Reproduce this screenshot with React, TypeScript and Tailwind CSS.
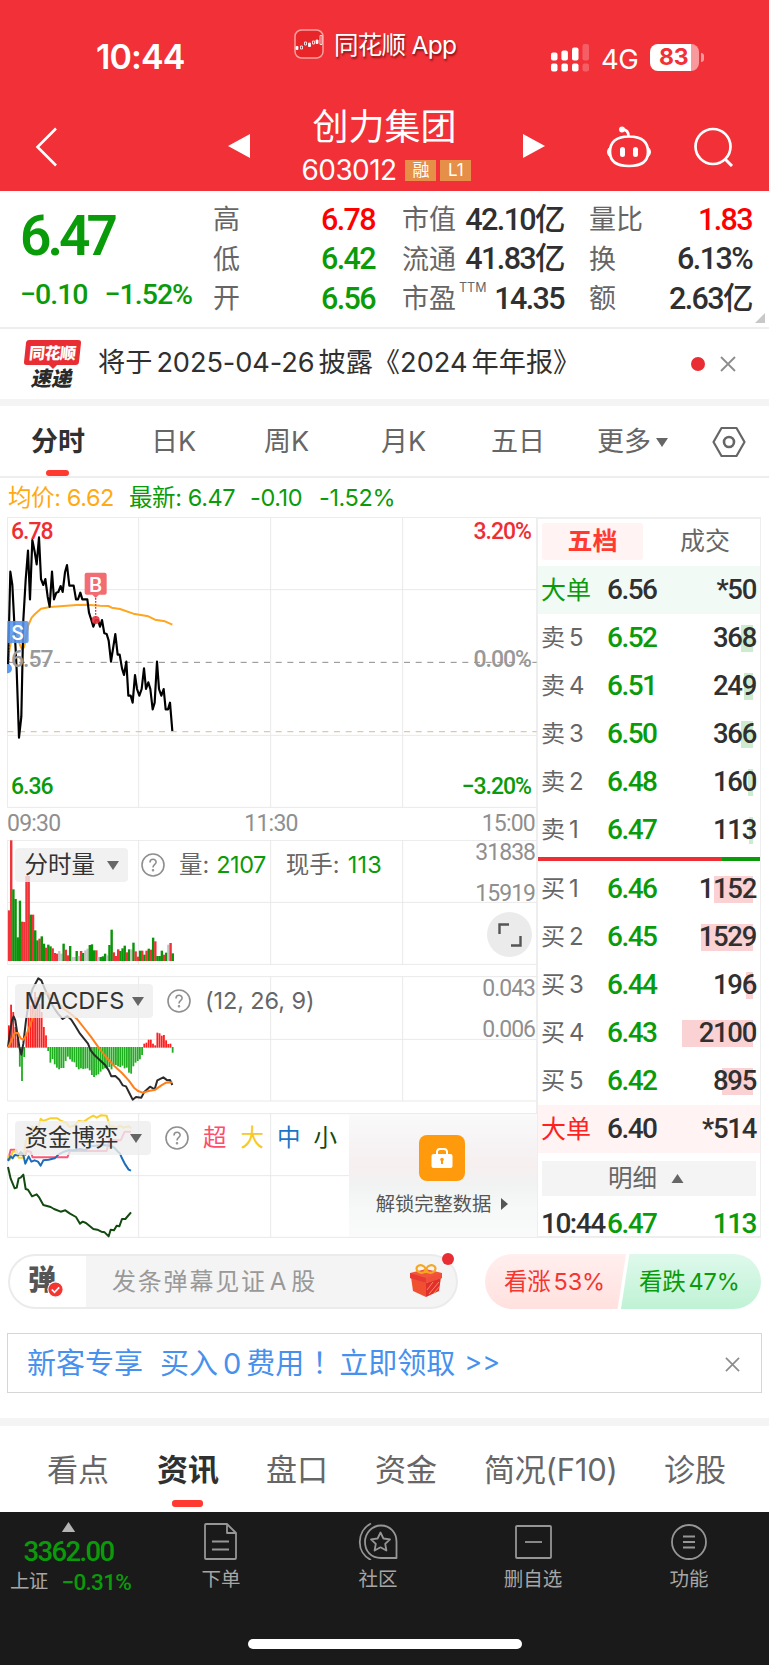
import type { ReactNode } from 'react';
import clsx from 'clsx';

const NUM = "[font-family:Roboto,'Noto_Sans_CJK_SC',sans-serif]";
const GREEN = 'text-[#0a9b0a]';
const RED = 'text-[#ef2e33]';

// ---------- data ----------

type Level = { label: string; price: string; qty: string; bar: number };

const asks: Level[] = [
  { label: '卖5', price: '6.52', qty: '368', bar: 12 },
  { label: '卖4', price: '6.51', qty: '249', bar: 9 },
  { label: '卖3', price: '6.50', qty: '366', bar: 12 },
  { label: '卖2', price: '6.48', qty: '160', bar: 5 },
  { label: '卖1', price: '6.47', qty: '113', bar: 4 },
];

const bids: Level[] = [
  { label: '买1', price: '6.46', qty: '1152', bar: 39 },
  { label: '买2', price: '6.45', qty: '1529', bar: 52 },
  { label: '买3', price: '6.44', qty: '196', bar: 7 },
  { label: '买4', price: '6.43', qty: '2100', bar: 71 },
  { label: '买5', price: '6.42', qty: '895', bar: 31 },
];

const pricePoints =
  '24,470 31,185 37,225 44,360 50,480 57,683 64,620 70,330 77,210 84,122 90,268 97,90 104,125 110,163 117,82 123,207 130,225 136,207 143,260 149,290 156,185 162,268 169,248 175,246 182,228 188,246 195,187 201,165 208,227 221,227 228,268 234,268 241,248 247,268 262,268 267,308 274,330 280,350 287,330 294,330 300,350 306,330 313,370 320,372 326,392 333,455 346,372 353,434 359,434 366,475 372,495 379,455 385,557 392,557 398,578 405,495 411,537 418,557 425,537 432,475 438,537 445,517 451,537 458,598 464,578 471,455 477,537 484,557 491,537 497,598 504,598 510,578 517,663';
const avgPoints =
  '24,450 30,410 38,375 45,365 52,380 60,405 66,418 72,412 78,385 84,348 95,323 105,312 123,296 150,291 190,288 230,285 260,284 300,287 325,288 335,293 360,297 400,311 445,319 465,329 495,334 517,344';

const volume =
  '240r 30r 177g 206g 321g 211g 274r 275r 137r 137r 253g 253r 300g 330g 325r 318g 340g 352r 343g 348g 354r 368r 370r 362x 370x 340g 358r 375r 347g 380x 380x 362g 377x 362r 368g 360x 355x 344g 342g 360g 360r 380x 380g 378g 370g 375x 344g 298g 366r 377r 357r 362g 354g 346g 366r 357g 357x 337g 363r 379r 361g 361r 373g 361r 355g 358r 322g 333r 377g 377g 361g 373r 367g 343x 338r 369g'
    .split(' ')
    .map((s) => ({ y: parseInt(s, 10), kind: s.slice(-1) }));
const volumeFill: Record<string, string> = { r: '#ef3338', g: '#0a940a', x: '#c3c3c3' };

const macdBars = [
  585, 523, 545, 590, 625, 707, 750, 678, 610, 560, 525, 510, 485, 500, 520, 545, 590, 615, 660, 695, 684, 700, 710,
  715, 711, 711, 690, 677, 685, 692, 694, 708, 715, 712, 714, 713, 712, 718, 732, 738, 733, 730, 722, 715, 712, 712,
  708, 715, 705, 702, 706, 708, 704, 712, 710, 725, 728, 706, 695, 690, 685, 672, 640, 637, 628, 628, 640, 645, 607,
  609, 616, 614, 630, 641, 640, 665,
];

// ---------- small pieces ----------

function Caret({ className }: { className?: string }) {
  return (
    <svg viewBox="0 0 12 9" className={clsx('shrink-0', className)}>
      <path d="M0 0h12L6 9z" fill="currentColor" />
    </svg>
  );
}

function Cross({ className }: { className?: string }) {
  return (
    <svg viewBox="0 0 16 16" className={clsx('shrink-0', className)} fill="none" stroke="#8c8c8c" strokeWidth="1.8">
      <path d="M1 1l14 14M15 1L1 15" />
    </svg>
  );
}

function Help() {
  return (
    <svg viewBox="0 0 24 24" className="size-6 shrink-0" fill="none" stroke="#8f8f8f" strokeWidth="1.6">
      <circle cx="12" cy="12" r="11" />
      <path d="M9 9.4c0-4.2 6.3-4 6.1-.2C15 11.400 12 11.300 12 14.400" />
      <circle cx="12" cy="17.200" r=".5" />
    </svg>
  );
}

function Grid({ top, mid, bottom, cut = 1610 }: { top: number; mid: number; bottom: number; cut?: number }) {
  return (
    <g stroke="#e9e9e9" strokeWidth="3" fill="none">
      <path d={`M22 ${top}H1610M22 ${bottom}H1610M22 ${top}V${bottom}`} />
      <path d={`M22 ${mid}H${cut}M416 ${top}V${bottom}M812 ${top}V${bottom}M1208 ${top}V${bottom}`} />
    </g>
  );
}

function ChartHead({ name, width, children }: { name: string; width: string; children: ReactNode }) {
  return (
    <div className="absolute left-2 top-2 flex h-[34px] items-center whitespace-nowrap text-[23.5px] text-[#666]">
      <div className={clsx('flex h-full items-center justify-between rounded-[4px] bg-[#eeeeee]/80 pl-[9.5px] pr-[9px] text-[#333]', width)}>
        {name}
        <Caret className="h-[9px] w-3 text-[#666]" />
      </div>
      {children}
    </div>
  );
}

// ---------- sections ----------

function Header() {
  return (
    <header className="flex h-[191px] flex-col bg-[#f13038] text-white">
      <div className="flex h-[100px] items-start">
        <div className="ml-[96px] mt-[40px] w-[198px] text-[34px] font-semibold leading-[34px] tracking-[-0.9px]">10:44</div>
        <svg viewBox="0 0 30 30" className="mt-[29px] size-[30px]">
          <rect x="1" y="1" width="28" height="28" rx="6.500" fill="#e82529" stroke="#f7a09f" strokeWidth="1.500" />
          <path d="M2 20l5-1 4-4 4 2 4-4 4-1 4-6" stroke="#c91b20" fill="none" />
          <g fill="#fff" stroke="#fff" strokeWidth=".8">
            <path d="M2 17.500h2v3H2zM14.500 14h2v3.500h-2zM22 11h2v3.500h-2z" />
            <path d="M6.500 17h2v3h-2zM10.500 13h2v3h-2zM18.500 12h2v3h-2zM26 6.500h2v9h-2z" fill="none" />
          </g>
        </svg>
        <div className="ml-[10px] mt-[31px] w-[217px] whitespace-nowrap text-[24.5px] leading-[28px] tracking-[-0.7px] [text-shadow:1px_2px_2px_rgba(60,0,0,.6)]">
          同花顺 App
        </div>
        <svg viewBox="0 0 38 28" className="mt-[43.500px] h-7 w-[38px]" fill="#fff">
          <rect x="0" y="8.500" width="6.500" height="8" rx="2" />
          <rect x="10.400" y="6.500" width="6.500" height="10" rx="2" />
          <rect x="21" y="3.500" width="6.500" height="13" rx="2" />
          <rect x="0" y="19.500" width="6.500" height="8" rx="2" />
          <rect x="10.400" y="19.500" width="6.500" height="8" rx="2" />
          <rect x="21" y="19.500" width="6.500" height="8" rx="2" />
          <g opacity=".22">
            <rect x="31.500" y="0" width="6.500" height="16.500" rx="2" />
            <rect x="31.500" y="19.500" width="6.500" height="8" rx="2" />
          </g>
        </svg>
        <div className="ml-[12px] mt-[44px] w-[49px] text-[27.5px] leading-[30px] tracking-[-0.5px]">4G</div>
        <div className="mt-[44px] flex items-center">
          <div className="flex h-[27px] w-[49px] items-center overflow-hidden rounded-[8px] bg-[linear-gradient(90deg,#fff_83%,#f89a9d_83%)] pl-[9px] text-[23px] font-bold leading-none tracking-[-0.3px] text-[#f13038]">
            83
          </div>
          <div className="ml-[1.5px] h-[9px] w-[3px] rounded-r-full bg-[#f89a9d]" />
        </div>
      </div>
      <div className="flex h-[91px]">
        <svg viewBox="0 0 22 40" className="ml-[35px] mt-[27px] h-10 w-[22px]" fill="none" stroke="#fff" strokeWidth="2.600">
          <path d="M21 1.500L2.500 20 21 38.500" />
        </svg>
        <svg viewBox="0 0 22 24" className="ml-[171px] mt-[34px] h-6 w-[22px]" fill="#fff">
          <path d="M22 0v24L0 12z" />
        </svg>
        <div className="flex w-[273px] flex-col items-center">
          <div className="-ml-[4px] mt-[7px] text-[36px] leading-[40px]">创力集团</div>
          <div className="mt-[11px] flex items-center gap-1">
            <span className="mr-[5px] text-[28px] leading-6 tracking-[-0.6px]">603012</span>
            <span className="grid h-[21px] w-[31px] place-items-center bg-[#e58f49] text-[17px] leading-none">融</span>
            <span className="grid h-[21px] w-[31px] place-items-center bg-[#e58f49] text-[17px] leading-none">L1</span>
          </div>
        </div>
        <svg viewBox="0 0 22 24" className="mt-[34px] h-6 w-[22px]" fill="#fff">
          <path d="M0 0v24l22-12z" />
        </svg>
        <svg viewBox="0 0 46 42" className="ml-[61px] mt-[26px] h-[42px] w-[46px]" fill="none" stroke="#fff" strokeWidth="2.700">
          <path d="M23 10.500C10 10.500 4 16 4 26c0 9 6 14 19 14s19-5 19-14c0-10-6-15.500-19-15.500zM22.500 10c0-4-2-6.200-6-6.600" />
          <circle cx="16" cy="3.500" r="1.600" fill="#fff" />
          <path d="M4 21c-3.300 3-3.300 7 0 10zM42 21c3.300 3 3.300 7 0 10z" fill="#fff" strokeWidth="1" />
          <path d="M16.500 23.500v5M29.500 23.500v5" strokeWidth="5" strokeLinecap="round" />
        </svg>
        <svg viewBox="0 0 40 40" className="ml-[41.5px] mt-[27px] size-10" fill="none" stroke="#fff" strokeWidth="2.700">
          <circle cx="19" cy="19.500" r="17.500" />
          <path d="M31 32l7 7" strokeWidth="3" />
        </svg>
      </div>
    </header>
  );
}

function QuoteCol({ rows, className }: { rows: [ReactNode, string, string][]; className: string }) {
  return (
    <div className={clsx('flex flex-col', className)}>
      {rows.map(([label, value, color], i) => (
        <div key={i} className="flex h-[39.5px] items-center justify-between whitespace-nowrap">
          <span className="text-[27px] leading-none text-[#666]">{label}</span>
          <span className={clsx(NUM, 'text-[30.5px] font-medium leading-none tracking-[-1.6px]', color)}>{value}</span>
        </div>
      ))}
    </div>
  );
}

function Quote() {
  return (
    <section className="relative flex h-[138px] border-b-2 border-[#eeeeee] pt-[9px]">
      <div className={clsx(NUM, 'ml-[20px] w-[193px] whitespace-nowrap', GREEN)}>
        <div className="mt-[9px] text-[55px] font-semibold leading-[54px] tracking-[-4px]">6.47</div>
        <div className="mt-[18px] flex gap-[17px] text-[28.5px] font-medium leading-[28px] tracking-[-1px]">
          <span>−0.10</span>
          <span>−1.52%</span>
        </div>
      </div>
      <QuoteCol
        className="w-[162px]"
        rows={[
          ['高', '6.78', 'text-[#ff0000]'],
          ['低', '6.42', GREEN],
          ['开', '6.56', GREEN],
        ]}
      />
      <QuoteCol
        className="ml-[27px] w-[162px]"
        rows={[
          ['市值', '42.10亿', 'text-[#303030]'],
          ['流通', '41.83亿', 'text-[#303030]'],
          [
            <>
              市盈<sup className="relative -top-[16px] ml-[3px] align-baseline text-[12.5px]">TTM</sup>
            </>,
            '14.35',
            'text-[#303030]',
          ],
        ]}
      />
      <QuoteCol
        className="ml-[25px] w-[163px]"
        rows={[
          ['量比', '1.83', 'text-[#ff0000]'],
          ['换', '6.13%', 'text-[#303030]'],
          ['额', '2.63亿', 'text-[#303030]'],
        ]}
      />
      <svg viewBox="0 0 10 10" className="absolute bottom-[4px] right-[4px] size-[10px]">
        <path d="M10 0v10H0z" fill="#c8c8c8" />
      </svg>
    </section>
  );
}

function News() {
  return (
    <section className="flex h-[77px] items-center border-b-[7px] border-[#f4f4f4] pb-px">
      <div className="ml-[24px] flex w-[57px] flex-col items-center font-black leading-none">
        <div className="grid h-[25px] w-[55px] -skew-x-6 place-items-center whitespace-nowrap rounded-[3px] bg-[#e92e33] text-[16px] leading-none tracking-[-0.5px] text-white">
          同花顺
        </div>
        <svg viewBox="0 0 8 4" className="h-1 w-2">
          <path d="M0 0h8L4 4z" fill="#e92e33" />
        </svg>
        <div className="-skew-x-12 text-[20.5px] leading-[19px] text-[#2a2a2a]">速递</div>
      </div>
      <div className="ml-[17px] w-[593px] whitespace-nowrap text-[27.2px] text-[#303030]">
        将于<span className="ml-1 tracking-[-0.1px]">2025-04-26</span>
        <span className="ml-1">披露《</span>2024<span className="ml-1">年年报》</span>
      </div>
      <div className="size-[14px] rounded-full bg-[#e92e33]" />
      <Cross className="ml-[15px] size-[16px]" />
    </section>
  );
}

function PeriodTabs() {
  return (
    <section className="flex h-[72px] items-center border-b-2 border-[#eeeeee] pt-[2px] text-[27px] text-[#666]">
      <div className="relative ml-[31px] flex h-full w-[120px] items-center font-bold text-[#303030]">
        分时
        <span className="absolute bottom-0 left-[15px] h-[6px] w-[23px] rounded-[3px] bg-[#ff3a30]" />
      </div>
      <div className="w-[113px]">日K</div>
      <div className="w-[117px]">周K</div>
      <div className="w-[110px]">月K</div>
      <div className="w-[106px]">五日</div>
      <div className="flex w-[115px] items-center">
        更多
        <Caret className="ml-[5px] h-[9px] w-3" />
      </div>
      <svg viewBox="0 0 34 32" className="h-8 w-[34px]" fill="none" stroke="#666" strokeWidth="2.2">
        <path d="M9.500 2h15l8 14-8 14h-15l-8-14z" strokeLinejoin="round" />
        <circle cx="17" cy="16" r="5" strokeWidth="2.600" />
      </svg>
    </section>
  );
}

function MainChart() {
  return (
    <div className={clsx(NUM, 'relative h-[323px] text-[23px] font-medium leading-none tracking-[-1px]')}>
      <svg viewBox="21 21 1590 873" className="h-[291px] w-[530px]" fill="none" strokeLinejoin="round">
        <Grid top={22} mid={239} bottom={892} />
        <path d="M22 676H1610" stroke="#e9e9e9" strokeWidth="3" />
        <path d="M22 457H1610" stroke="#8c8c8c" strokeWidth="3" strokeDasharray="18 17" />
        <path d="M22 665H1610" stroke="#dfc8a4" strokeWidth="4" strokeDasharray="18 17" />
        <polyline points={avgPoints} stroke="#ffa51f" strokeWidth="6" />
        <polyline points={pricePoints} stroke="#000" strokeWidth="6.500" />
        <path d="M287 255v70" stroke="#e2323c" strokeWidth="4" strokeDasharray="5 4" />
        <circle cx="287" cy="330" r="12" fill="#e2323c" fillOpacity=".9" />
        <path d="M260 188h54a6 6 0 0 1 6 6v54a6 6 0 0 1-6 6h-17l-10 10-10-10h-17a6 6 0 0 1-6-6v-54a6 6 0 0 1 6-6z" fill="#f16468" fillOpacity=".94" />
        <path d="M28 400v66" stroke="#3f86e0" strokeWidth="3" strokeDasharray="5 4" />
        <path d="M22 333h58a6 6 0 0 1 6 6v54a6 6 0 0 1-6 6H22z" fill="#5794ea" fillOpacity=".88" />
        <path d="M22 465a11 11 0 0 1 0 22z" fill="#5a9cf0" stroke="#5a9cf0" strokeWidth="6" />
      </svg>
      <span className="absolute left-[4.500px] top-[106px] text-[20px] text-white">S</span>
      <span className="absolute left-[82px] top-[58px] text-[21px] text-white">B</span>
      <span className={clsx('absolute left-[4px] top-[3px]', RED)}>6.78</span>
      <span className="absolute left-[4px] top-[131px] text-[#999]">6.57</span>
      <span className={clsx('absolute left-[4px] top-[258px]', GREEN)}>6.36</span>
      <span className={clsx('absolute right-[6px] top-[3px]', RED)}>3.20%</span>
      <span className="absolute right-[6px] top-[131px] text-[#999]">0.00%</span>
      <span className={clsx('absolute right-[6px] top-[258px]', GREEN)}>−3.20%</span>
      <div className="flex justify-between pr-[2px] pt-[4px] text-[23px] font-normal tracking-[-0.8px] text-[#8f8f8f]">
        <span>09:30</span>
        <span>11:30</span>
        <span>15:00</span>
      </div>
    </div>
  );
}

function AxisLabels({ labels }: { labels: [string, string] }) {
  return (
    <div className={clsx(NUM, 'absolute right-[2px] top-px flex flex-col items-end text-[23px] leading-none tracking-[-1px] text-[#8f8f8f]')}>
      <span className="h-[41px]">{labels[0]}</span>
      <span>{labels[1]}</span>
    </div>
  );
}

function VolumeChart() {
  return (
    <div className="relative h-[125px]">
      <svg viewBox="21 29 1590 375" className="h-[125px] w-[530px]">
        <Grid top={30} mid={216} bottom={402} />
        {volume.map(({ y, kind }, i) => (
          <rect key={i} x={23.5 + i * 6.55} y={y} width={kind === 'x' ? 7 : 7.2} height={392 - y} fill={volumeFill[kind]} />
        ))}
      </svg>
      <ChartHead name="分时量" width="w-[113px]">
        <span className="ml-[13px] flex">
          <Help />
        </span>
        <span className="ml-[14px]">量:</span>
        <span className={clsx('ml-[7px] tracking-[-0.5px]', GREEN)}>2107</span>
        <span className="ml-[20px]">现手:</span>
        <span className={clsx('ml-[8px] tracking-[0.3px]', GREEN)}>113</span>
      </ChartHead>
      <AxisLabels labels={['31838', '15919']} />
      <div className="absolute right-[5px] top-[72px] grid size-[45px] place-items-center rounded-full bg-[#ebebeb]">
        <svg viewBox="0 0 24 24" className="size-6" fill="none" stroke="#555" strokeWidth="2.400">
          <path d="M1.500 11V1.500H11M22.500 13v9.500H13" />
        </svg>
      </div>
    </div>
  );
}

function MacdChart() {
  return (
    <div className="relative mt-[11px] h-[126px]">
      <svg viewBox="21 437 1590 378" className="h-[126px] w-[530px]" fill="none" strokeLinejoin="round">
        <Grid top={439} mid={627} bottom={812} />
        {macdBars.map((y, i) => (
          <rect
            key={i}
            x={24 + i * 6.55}
            y={Math.min(y, 650)}
            width="5.400"
            height={Math.abs(y - 650) + 2}
            fill={y < 650 ? '#ff1f1f' : '#1fae1f'}
          />
        ))}
        <polyline
          points="24,650 30,605 36,570 41,558 46,570 52,610 58,650 64,673 70,640 78,570 88,505 98,475 106,460 115,444 124,450 132,470 142,492 152,515 162,533 174,550 188,566 202,557 214,568 226,587 240,610 252,625 264,640 272,660 284,675 300,690 316,705 326,720 334,738 346,737 358,748 368,765 378,768 388,788 398,808 408,800 424,802 432,786 450,769 464,777 472,750 490,741 502,750 510,749 517,764"
          stroke="#2b2b2b"
          strokeWidth="6"
        />
        <polyline
          points="24,652 34,632 44,608 54,608 62,624 70,628 80,612 90,585 104,545 118,505 130,490 142,488 156,498 172,515 190,534 210,549 230,565 250,590 272,618 296,652 318,680 342,706 366,728 386,750 402,772 414,782 428,787 446,782 466,778 484,765 498,757 517,756"
          stroke="#ff7f1a"
          strokeWidth="6"
        />
      </svg>
      <ChartHead name="MACDFS" width="w-[138px]">
        <span className="ml-[14px] flex">
          <Help />
        </span>
        <span className="ml-[14px] tracking-[-0.1px]">(12, 26, 9)</span>
      </ChartHead>
      <AxisLabels labels={['0.043', '0.006']} />
    </div>
  );
}

function FundChart() {
  return (
    <div className="relative mt-[11px] h-[125px]">
      <svg viewBox="21 848 1590 375" className="h-[125px] w-[530px]" fill="none" strokeLinejoin="round" strokeWidth="6">
        <Grid top={850} mid={1036} bottom={1221} cut={1047} />
        <polyline stroke="#ff5578" points="24,990 32,958 48,958 52,972 76,974 80,962 92,964 98,981 202,981 210,962 320,962 328,930 362,930 374,904 393,904" />
        <polyline stroke="#f8d030" points="24,975 30,988 38,965 46,962 56,982 70,982 78,930 88,920 97,888 104,898 112,902 122,865 130,872 150,864 172,864 184,872 200,878 208,890 222,886 236,872 252,874 264,865 280,856 290,862 302,855 320,856 330,890 340,888 350,893 360,886 370,892 386,888 393,894" />
        <polyline stroke="#1b6dbb" points="24,992 32,978 38,984 44,974 54,975 62,965 70,974 76,1000 86,978 94,994 104,990 114,994 122,1006 130,990 146,988 164,984 176,972 192,964 206,960 224,960 240,956 256,960 270,948 286,946 310,944 330,946 342,951 352,962 360,970 366,984 376,1003 386,1018 393,1021" />
        <polyline stroke="#124a10" points="24,1010 32,1045 44,1074 50,1072 56,1044 62,1042 70,1033 77,1076 84,1078 96,1098 110,1092 118,1102 130,1124 152,1130 162,1136 182,1144 196,1140 210,1150 228,1160 240,1180 248,1174 258,1178 280,1196 292,1198 304,1204 314,1206 326,1218 332,1198 342,1200 350,1186 358,1188 366,1166 376,1166 393,1146" />
      </svg>
      <ChartHead name="资金博弈" width="w-[136px]">
        <span className="ml-[14px] flex">
          <Help />
        </span>
        <span className="ml-[14px] text-[#ff4d6d]">超</span>
        <span className="ml-[14px] text-[#f9c822]">大</span>
        <span className="ml-[13px] text-[#1b74c5]">中</span>
        <span className="ml-[13px] text-[#124a10]">小</span>
      </ChartHead>
      <div className="absolute right-0 top-px flex h-[123px] w-[188px] flex-col items-center bg-[linear-gradient(180deg,#fafafa_0%,#f6f3f4_25%,#f7eff0_42%,#f0f3f2_58%,#f6f9f8_78%,#fafafa_100%)] pr-[2px] pt-[21px]">
        <div className="grid size-[46px] place-items-center rounded-[8px] bg-[#ff9a0c]">
          <svg viewBox="0 0 22 22" className="size-[22px]" fill="none">
            <rect x=".5" y="7" width="21" height="14" rx="2" fill="#fff" />
            <path d="M6 8V4.500A3 3 0 0 1 9 2h4a3 3 0 0 1 3 2.500V8" stroke="#fff" strokeWidth="2" />
            <path d="M11 13v4" stroke="#ff9a0c" strokeWidth="2" />
            <circle cx="11" cy="12.500" r="1.800" fill="#ff9a0c" />
          </svg>
        </div>
        <div className="mt-[9px] flex items-center gap-[10px] whitespace-nowrap text-[19.3px] leading-[28px] text-[#555]">
          解锁完整数据
          <svg viewBox="0 0 7 12" className="h-3 w-[7px]">
            <path d="M0 0l7 6-7 6z" fill="#555" />
          </svg>
        </div>
      </div>
    </div>
  );
}

function BookRow({ level, side }: { level: Level; side: 'ask' | 'bid' }) {
  return (
    <div className="relative flex h-12 items-center pl-[3px] pr-[4px]">
      <span
        className={clsx('absolute right-[7px] top-[11px] h-[27px]', side === 'ask' ? 'bg-[#cdeccf]' : 'bg-[#fbd2d4]')}
        style={{ width: level.bar }}
      />
      <span className="flex w-[66px] items-center gap-[4px] text-[24px] text-[#666]">
        {level.label[0]}
        <span>{level.label[1]}</span>
      </span>
      <span className={clsx(NUM, 'text-[28px] font-medium tracking-[-1.5px]', GREEN)}>{level.price}</span>
      <span className={clsx(NUM, 'relative ml-auto text-[27.5px] font-medium tracking-[-1.3px] text-[#303030]')}>{level.qty}</span>
    </div>
  );
}

function BigOrder({ className, labelColor, price, qty }: { className: string; labelColor: string; price: string; qty: string }) {
  return (
    <div className={clsx('flex h-12 items-center pl-[3px] pr-[4px]', className)}>
      <span className={clsx('w-[66px] text-[25px]', labelColor)}>大单</span>
      <span className={clsx(NUM, 'text-[28px] font-medium tracking-[-1.5px] text-[#303030]')}>{price}</span>
      <span className={clsx(NUM, 'ml-auto text-[27.5px] font-medium tracking-[-1.3px] text-[#303030]')}>{qty}</span>
    </div>
  );
}

function OrderBook() {
  return (
    <aside className="-ml-px flex h-[721px] w-[225px] flex-col border-2 border-r border-[#eeeeee] leading-none">
      <div className="flex h-[47px] items-start pl-[4px] pt-[4px] text-[25px]">
        <div className="grid h-[37px] w-[101px] place-items-center rounded-[3px] bg-[#fff3f3] font-bold text-[#ff3a30]">五档</div>
        <div className="grid h-[37px] flex-1 place-items-center pl-[7px] text-[#666]">成交</div>
      </div>
      <BigOrder className="bg-[#f2faf6]" labelColor={GREEN} price="6.56" qty="*50" />
      {asks.map((l) => (
        <BookRow key={l.label} level={l} side="ask" />
      ))}
      <div className="mb-[4px] mt-[3px] flex h-1 shrink-0">
        <div className="w-[184px] bg-[#ef2e33]" />
        <div className="flex-1 bg-[#0a9b0a]" />
      </div>
      {bids.map((l) => (
        <BookRow key={l.label} level={l} side="bid" />
      ))}
      <BigOrder className="bg-[#fff3f3]" labelColor="text-[#ff2020]" price="6.40" qty="*514" />
      <div className="mx-[4px] mt-[8px] flex h-[35px] shrink-0 items-center justify-center gap-[14px] bg-[#f4f4f4] pr-[6px] text-[24.5px] text-[#666]">
        明细
        <Caret className="h-[9px] w-[13px] rotate-180" />
      </div>
      <div className={clsx(NUM, 'flex flex-1 items-end pl-[3px] pr-[4px] text-[28px] font-medium leading-[24px] tracking-[-1.5px] text-[#303030]')}>
        <span className="w-[66px]">10:44</span>
        <span className={GREEN}>6.47</span>
        <span className={clsx('ml-auto', GREEN)}>113</span>
      </div>
    </aside>
  );
}

function Gift() {
  return (
    <svg viewBox="0 0 34 36" className="h-9 w-[34px]">
      <path d="M2 14l15 6v14L4 28z" fill="#f0502f" />
      <path d="M32 14l-15 6v14l13-6z" fill="#e02f2c" />
      <path d="M1 10l16-4 16 4v5l-16 5-16-5z" fill="#f2553c" />
      <path d="M1 10l16 5v5L1 15z" fill="#e83a31" />
      <path d="M33 10l-16 5v5l16-5z" fill="#f0503a" />
      <path d="M20 31l10-12M18 27l6-8M25 30l6-7" stroke="#f98a5c" strokeWidth="1" />
      <g fill="none" stroke="#f5a623" strokeWidth="2.200">
        <ellipse cx="12" cy="6" rx="4.500" ry="3.700" transform="rotate(20 12 6)" />
        <ellipse cx="22" cy="6" rx="4.500" ry="3.700" transform="rotate(-20 22 6)" />
        <path d="M15 9h4" />
      </g>
    </svg>
  );
}

function Danmu() {
  return (
    <section className="mt-[16px] flex h-[55px] items-center">
      <div className="relative ml-[8px] flex h-[55px] w-[450px] rounded-full border-2 border-[#ebebeb] bg-[linear-gradient(90deg,#fff_76px,#f4f4f4_76px)]">
        <div className="relative flex w-[76px] items-center pl-[18px] pb-1 text-[28px] font-black leading-none text-[#555]">
          弹
          <svg viewBox="0 0 16 16" className="absolute left-[37px] top-[25px] size-[17px]">
            <circle cx="8" cy="8" r="7.200" fill="#f5352f" stroke="#fff" strokeWidth="1" />
            <path d="M4.500 8l2.600 2.600L11.500 6" stroke="#fff" strokeWidth="1.600" fill="none" />
          </svg>
        </div>
        <div className="flex flex-1 items-center pl-[26px] text-[24px] tracking-[1.800px] text-[#999]">
          发条弹幕见证<span className="mx-[3px]">A</span>股
        </div>
        <div className="mr-[13px] mt-[7px]">
          <Gift />
        </div>
        <span className="absolute -top-[3px] right-[2px] size-3 rounded-full bg-[#e92e33]" />
      </div>
      <div className="ml-[27px] flex text-[23.5px] leading-[55px]">
        <div className="h-[55px] w-[141px] rounded-l-[28px] bg-gradient-to-b from-[#ffefee] to-[#ffe1df] pl-[19px] tracking-[-0.2px] text-[#f5352f] [clip-path:polygon(0_0,100%_0,94%_100%,0_100%)]">
          看涨<span className="ml-[3px]">53%</span>
        </div>
        <div className="-ml-[5px] h-[55px] w-[140px] rounded-r-[28px] bg-gradient-to-b from-[#dff9ec] to-[#bff2d5] pl-[18px] tracking-[-0.2px] text-[#0a9b0a] [clip-path:polygon(6%_0,100%_0,100%_100%,0_100%)]">
          看跌<span className="ml-[3px]">47%</span>
        </div>
      </div>
    </section>
  );
}

function Promo() {
  return (
    <section className="mx-[7px] mt-[24px] flex h-[60px] items-center justify-between border-[1.5px] border-[#d6d6d6] pl-[19px] pr-[21px] pt-[2px]">
      <div className="flex whitespace-nowrap text-[29px] text-[#4791ee]">
        <span>新客专享</span>
        <span className="ml-[17px]">买入</span>
        <span className="mx-[5px]">0</span>
        <span>费用</span>
        <span className="ml-[8px] w-[27px]">！</span>
        <span>立即领取</span>
        <span className="ml-[9px] text-[27px]">&gt;&gt;</span>
      </div>
      <Cross className="size-[15px]" />
    </section>
  );
}

function InfoTabs() {
  return (
    <nav className="mt-[25px] flex h-[94px] items-center whitespace-nowrap border-t-[8px] border-[#f4f4f4] pl-[47px] pt-[3px] text-[31px] text-[#666]">
      <div className="w-[110px]">看点</div>
      <div className="relative flex h-full w-[109px] items-center font-bold text-[#303030]">
        资讯
        <span className="absolute bottom-[5px] left-[15px] h-[7px] w-[31px] rounded-[3px] bg-[#ff3a30]" />
      </div>
      <div className="w-[109px]">盘口</div>
      <div className="w-[109px]">资金</div>
      <div className="w-[180px] tracking-[-0.2px]">简况(F10)</div>
      <div>诊股</div>
    </nav>
  );
}

function NavItem({ label, className, children }: { label: string; className: string; children: ReactNode }) {
  return (
    <div className={clsx('flex flex-col items-center pt-[10px] text-[19.5px] text-[#a6a6a6]', className)}>
      <svg viewBox="0 0 40 38" className="h-[38px] w-10" fill="none" stroke="#969696" strokeWidth="1.800" strokeLinejoin="round">
        {children}
      </svg>
      <span className="mt-[5px] leading-7">{label}</span>
    </div>
  );
}

function BottomBar() {
  return (
    <footer className="relative flex h-[153px] shrink-0 bg-[#1a1a1a]">
      <div className={clsx(NUM, 'flex w-[142px] flex-col items-center whitespace-nowrap pt-[10px] font-medium', 'text-[#0a9b0a]')}>
        <Caret className="mr-[5px] h-[10px] w-[17px] rotate-180 text-[#b4b4b4]" />
        <div className="mr-[5px] mt-[6px] text-[27.5px] leading-[28px] tracking-[-1.6px]">3362.00</div>
        <div className="mt-[3px] flex items-center gap-[14px] pr-[1px] text-[22.5px] leading-[26px] tracking-[-0.7px]">
          <span className="text-[19.5px] font-normal text-[#a6a6a6]">上证</span>−0.31%
        </div>
      </div>
      <NavItem label="下单" className="ml-[17px] w-[124px]">
        <path d="M5 2h21l9 9v25a1 1 0 0 1-1 1H5a1 1 0 0 1-1-1V3a1 1 0 0 1 1-1zM26 2v9h9M11 19.500h17M11 27.500h17" />
      </NavItem>
      <NavItem label="社区" className="ml-[33px] w-[124px]">
        <path d="M23 3.500c9 0 15.500 7 15.500 16V36H23C13 36 7 29 7 20S14 3.500 23 3.500zM13 1.500C-2 9-2 31 13 38" />
        <path d="M22.500 10.500l2.900 6 6.600.8-4.800 4.600 1.200 6.600-5.900-3.200-5.900 3.200 1.200-6.600-4.800-4.600 6.600-.8z" />
      </NavItem>
      <NavItem label="删自选" className="ml-[31px] w-[124px]">
        <rect x="3" y="4" width="35" height="32" rx="1" />
        <path d="M12 20h17" />
      </NavItem>
      <NavItem label="功能" className="ml-[32px] w-[124px]">
        <circle cx="20" cy="20" r="17" />
        <path d="M14 14.500h12M14 20h12M14 25.500h12" />
      </NavItem>
      <div className="absolute bottom-[16px] left-[248px] h-[10px] w-[274px] rounded-full bg-white" />
    </footer>
  );
}

export default function App() {
  return (
    <div className="flex h-[1665px] w-[769px] flex-col overflow-hidden bg-white [font-family:Inter,'Noto_Sans_CJK_SC',sans-serif]">
      <Header />
      <Quote />
      <News />
      <PeriodTabs />
      <div className="flex h-[39px] items-center whitespace-nowrap pl-[8px] text-[23.5px] tracking-[-0.4px]">
        <span className="w-[121px] text-[#ffaa14]">均价: 6.62</span>
        <span className={clsx('w-[121px]', GREEN)}>最新: 6.47</span>
        <span className={clsx('w-[69px]', GREEN)}>-0.10</span>
        <span className={GREEN}>-1.52%</span>
      </div>
      <section className="flex pl-[7px]">
        <div className="w-[530px]">
          <MainChart />
          <VolumeChart />
          <MacdChart />
          <FundChart />
        </div>
        <OrderBook />
      </section>
      <Danmu />
      <Promo />
      <InfoTabs />
      <BottomBar />
    </div>
  );
}
